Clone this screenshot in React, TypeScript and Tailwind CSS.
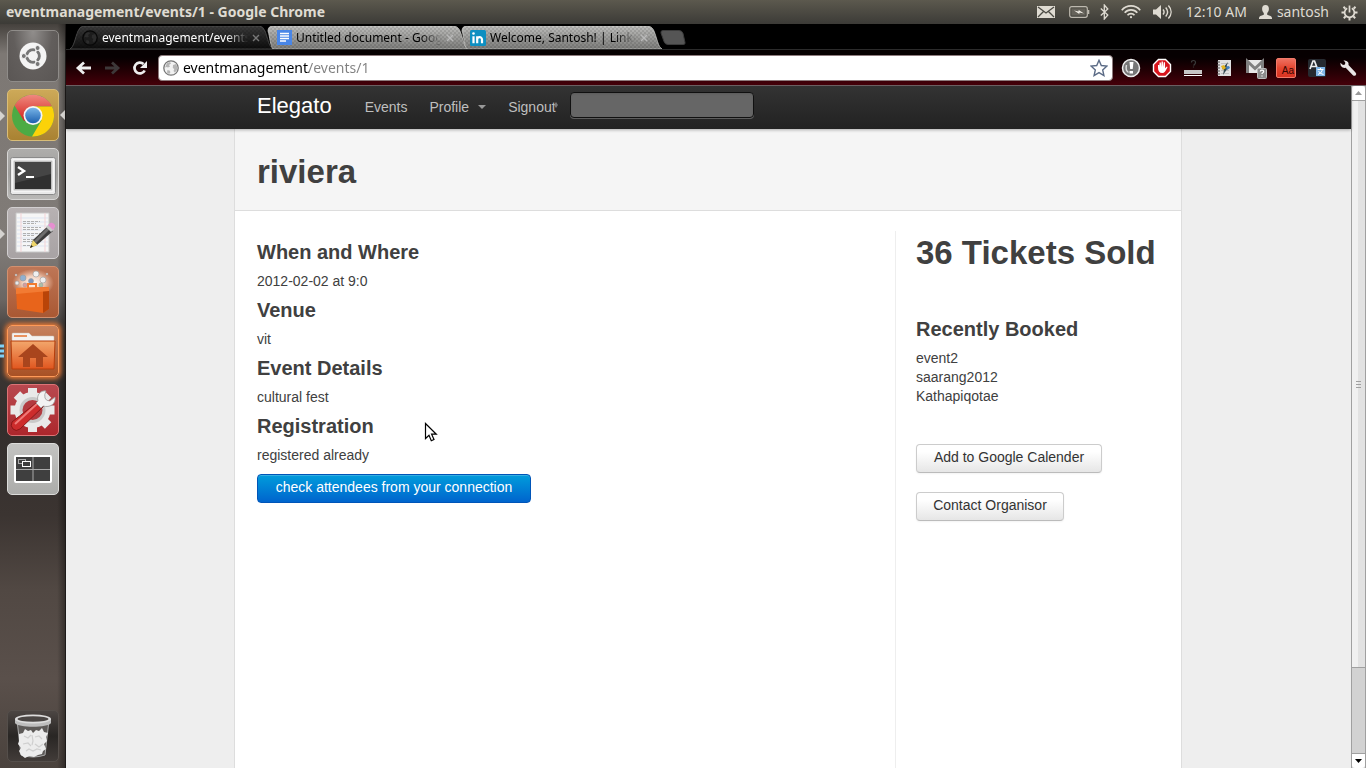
import type { ReactNode } from 'react';

const UI = "font-['Noto_Sans','Open_Sans',sans-serif]";

/* ---------- system panel ---------- */

function SystemBar() {
  return (
    <header
      className={`flex h-6 shrink-0 items-center justify-between bg-linear-to-b from-[#5c594e] to-[#3c3b37] pr-2 pl-[6px] text-[#dfdbd2] ${UI}`}
    >
      <h1 className="text-[14px] leading-6 font-bold whitespace-nowrap">eventmanagement/events/1 - Google Chrome</h1>
      <div className="flex items-center text-[14px] leading-6 whitespace-nowrap">
        <svg className="mr-[14px]" width="18" height="12" viewBox="0 0 18 12" fill="none">
          <rect width="18" height="12" fill="#dfdbd2" />
          <path d="M1 1l8 6 8-6M1 11l5.500-5.500M17 11l-5.500-5.500" stroke="#4b4a43" strokeWidth="1.300" />
        </svg>
        <svg className="mr-[10px]" width="21" height="12" viewBox="0 0 21 12" fill="none">
          <rect x=".7" y=".7" width="17.600" height="10.600" rx="2" stroke="#bdb9af" strokeWidth="1.200" />
          <rect x="2.500" y="2.500" width="14" height="7" fill="#65625a" />
          <path d="M19.500 4v4" stroke="#bdb9af" strokeWidth="1.600" />
          <path d="M5 4.500l4.500 1 .2-1.500 5.300 3.500-4.500-1-.2 1.500z" fill="#f2efe8" />
        </svg>
        <svg className="mr-[12px]" width="9" height="16" viewBox="0 0 9 16" fill="none">
          <path d="M.8 4.500l7 6.500L4.300 15V1l3.500 4-7 6.500" stroke="#dfdbd2" strokeWidth="1.300" />
        </svg>
        <svg className="mr-[12px]" width="20" height="14" viewBox="0 0 20 14" fill="none" stroke="#dfdbd2" strokeWidth="1.700">
          <path d="M.8 5.200C5.500-.6 14.500-.6 19.200 5.200" />
          <path d="M3.700 7.800c3.200-4 9.400-4 12.600 0" />
          <path d="M6.500 10.300c1.800-2.300 5.200-2.300 7 0" />
          <circle cx="10" cy="12.200" r="1.100" fill="#dfdbd2" stroke="none" />
        </svg>
        <svg className="mr-[13px]" width="20" height="16" viewBox="0 0 20 16" fill="none" stroke="#dfdbd2" strokeWidth="1.400">
          <path d="M0 5.500h3L8 1v14l-5-4.500H0z" fill="#dfdbd2" stroke="none" />
          <path d="M10 5.500c1.300 1.500 1.300 3.500 0 5M12.700 3.500c2.300 2.700 2.300 6.300 0 9M15.400 1.500c3.600 4 3.600 9 0 13" />
        </svg>
        <span className="mr-3">12:10 AM</span>
        <svg className="mr-[5px]" width="13" height="14" viewBox="0 0 13 14" fill="#dfdbd2">
          <path d="M6.500 0C8.800 0 9.900 1.600 9.900 3.700c0 2-.8 3.400-1.700 4.200v1.900c1.500.7 4.300.8 4.800 3.200V14H0v-1c.5-2.400 3.300-2.500 4.800-3.200V7.900C3.900 7.100 3.100 5.700 3.100 3.700 3.100 1.600 4.200 0 6.500 0z" />
        </svg>
        <span className="mr-3">santosh</span>
        <svg width="17" height="17" viewBox="0 0 17 17" fill="none" stroke="#dfdbd2">
          <path d="M6.200 4.200a4.900 4.900 0 1 0 4.600 0" strokeWidth="1.700" />
          <path d="M8.500 1.500v7" strokeWidth="1.700" />
          <path
            d="M2.500 2.800l1.900 1.900M14.500 2.800l-1.900 1.900M.5 8.500h2.700M13.800 8.500h2.700M2.800 14.200l1.900-1.900M14.200 14.200l-1.900-1.900M8.500 13.500v3"
            strokeWidth="2"
          />
        </svg>
      </div>
    </header>
  );
}

/* ---------- launcher ---------- */

function Tile({ tone, label, children, mark }: { tone: string; label: string; children: ReactNode; mark?: ReactNode }) {
  return (
    <button
      type="button"
      aria-label={label}
      className={`relative flex size-[52px] shrink-0 items-center justify-center rounded-[5px] border ${tone}`}
    >
      {children}
      {mark}
    </button>
  );
}

function Arrow() {
  return (
    <svg className="absolute top-[21px] -left-2" width="6" height="10" viewBox="0 0 6 10">
      <path d="M0 0l5 5-5 5z" fill="#d5d3d0" />
    </svg>
  );
}

function Launcher() {
  return (
    <nav
      aria-label="Launcher"
      className="flex w-[66px] shrink-0 flex-col gap-[7px] border-r border-[#1d1a19] bg-[linear-gradient(90deg,transparent_88%,rgba(0,0,0,.35)),linear-gradient(180deg,#45413d_0,#7d7874_4%,#807b77_30%,#6b6663_37%,#403a37_42%,#332e2c_54%,#3b3431_66%,#514843_76%,#5a504b_88%,#4a423d_100%)] px-[7px] py-[6px]"
    >
      <Tile label="Dash home" tone="border-[#8f8c89] bg-[radial-gradient(ellipse_at_50%_0%,#918e8c,#625e5c_55%,#5a5654)]">
        <svg width="28" height="28" viewBox="0 0 28 28" fill="none">
          <circle cx="14" cy="14" r="13.500" fill="#f4f4f4" />
          <circle cx="14" cy="14" r="6.300" stroke="#777" strokeWidth="3" />
          <path d="M14 14L5 14M14 14l5-8.500M14 14l5 8.500" stroke="#f4f4f4" strokeWidth="1.500" />
          <circle cx="14" cy="14" r="4.600" fill="#f4f4f4" />
          <g fill="#777" stroke="#f4f4f4">
            <circle cx="4.800" cy="14" r="2.500" />
            <circle cx="18.600" cy="6" r="2.500" />
            <circle cx="18.600" cy="22" r="2.500" />
          </g>
        </svg>
      </Tile>

      <Tile
        label="Google Chrome"
        tone="border-[#d9bd78] bg-linear-to-b from-[#cda958] to-[#a98232]"
        mark={
          <>
            <Arrow />
            <svg className="absolute top-[20px] -right-[7px]" width="5" height="10" viewBox="0 0 5 10">
              <path d="M5 0L0 5l5 5z" fill="#d5d3d0" />
            </svg>
          </>
        }
      >
        <svg width="44" height="44" viewBox="0 0 44 44">
          <defs>
            <linearGradient id="cr" x2="0" y2="1"><stop stopColor="#f08a80" /><stop offset="1" stopColor="#d3221c" /></linearGradient>
            <linearGradient id="cb" x2="0" y2="1"><stop stopColor="#78b5e8" /><stop offset="1" stopColor="#1c5fae" /></linearGradient>
          </defs>
          <circle cx="22" cy="22.500" r="21" fill="#4cab44" />
          <path d="M22 22.500L13 28 3.500 12.500A21 21 0 0 1 41 13.500H22z" fill="url(#cr)" />
          <path d="M22 13.500h19A21 21 0 0 1 21 43.500l9.500-16z" fill="#fbd209" />
          <circle cx="22" cy="22.500" r="9.500" fill="#f5f5f5" />
          <circle cx="22" cy="22.500" r="7.800" fill="url(#cb)" />
        </svg>
      </Tile>

      <Tile label="Terminal" tone="border-[#d7d6d5] bg-linear-to-b from-[#aeadab] via-[#a09f9d] to-[#b9b8b6] pt-1">
        <svg width="46" height="38" viewBox="0 0 46 38">
          <rect x=".5" y=".5" width="45" height="37" rx="2" fill="#e9e9e9" stroke="#8a8a8a" />
          <rect x="3" y="3" width="40" height="31" fill="#bdbdbd" stroke="#fff" />
          <rect x="5" y="5" width="36" height="27" fill="#303030" />
          <path d="M5 5h36v12L5 26z" fill="#454545" />
          <path d="M8 10l6 4-6 4" fill="none" stroke="#fff" strokeWidth="2.400" />
          <path d="M16 20h8" stroke="#fff" strokeWidth="2" />
        </svg>
      </Tile>

      <Tile label="Text Editor" tone="border-[#d2cfd0] bg-linear-to-b from-[#b7b1b2] to-[#a8a3a4]" mark={<Arrow />}>
        <svg width="46" height="46" viewBox="0 0 46 46">
          <path d="M6 3h33v39H6z" fill="#f6f6f6" stroke="#c8c8c8" />
          <path d="M7 8h31M7 12h31M7 16h31M7 20h31M7 24h31M7 28h31M7 32h31M7 36h31" stroke="#dde5f2" />
          <path d="M11 3v39M35 3v39" stroke="#f3d3d6" />
          <path
            d="M13 11.500h17M13 13.500h13M13 17.500h18M13 19.500h16M13 23.500h17M13 25.500h12M13 29.500h14M13 31.500h10M13 35.500h8"
            stroke="#b0b0b0"
            strokeDasharray="3 1"
          />
          <path d="M20 38l3-8 15-14 5 5-16 14z" fill="#3c3c3c" />
          <path d="M24 31l14-14 2 2-14 14z" fill="#6e6e6e" />
          <path d="M36 17l3-3 5.500 5L41 22z" fill="#c9c9c9" />
          <path d="M38 15l2.500-2c2-1 5.500 2 4.500 4l-2 3z" fill="#e68fd0" />
          <path d="M20 38l3-8 4.500 5z" fill="#efd66a" />
          <path d="M20 38l1.200-3 1.800 1.600z" fill="#222" />
        </svg>
      </Tile>

      <Tile label="Software Centre" tone="border-[#d2906f] bg-linear-to-b from-[#be7656] to-[#a95833]">
        <svg width="44" height="46" viewBox="0 0 44 46">
          <defs>
            <radialGradient id="glow"><stop stopColor="#fff" /><stop offset=".5" stopColor="#ffe7d8" stopOpacity=".8" /><stop offset="1" stopColor="#ffd7bd" stopOpacity="0" /></radialGradient>
          </defs>
          <ellipse cx="22" cy="14" rx="21" ry="14" fill="url(#glow)" />
          <g stroke="#999" strokeWidth=".6">
            <circle cx="12" cy="9" r="3" fill="#8fb0d0" />
            <circle cx="25" cy="5" r="3" fill="#f0f0f0" />
            <circle cx="20" cy="12" r="2.500" fill="#7e96bc" />
            <circle cx="32" cy="11" r="3" fill="#eee" />
            <circle cx="6" cy="14" r="2" fill="#e9e9e9" />
            <circle cx="14" cy="16" r="2" fill="#d99" />
            <circle cx="30" cy="16" r="2" fill="#a9c0a9" />
            <circle cx="36" cy="5" r="1" fill="#fff" />
            <circle cx="5" cy="6" r="1" fill="#fff" />
          </g>
          <path d="M5 19l33-1v22l-6 4-26-4z" fill="#e8641b" />
          <path d="M32 19l6-1v22l-6 4z" fill="#b94408" />
          <path d="M5 19l33-1v4L5 25z" fill="#f27b33" />
          <path d="M17 20v-5h8v5" fill="none" stroke="#f27c30" strokeWidth="2" />
        </svg>
      </Tile>

      <Tile
        label="Home Folder"
        tone="border-[#ff9a58] bg-linear-to-b from-[#c6815d] to-[#a85125] shadow-[0_0_5px_2px_#ee7a35]"
        mark={
          <svg className="absolute top-[18px] -left-2" width="6" height="14" viewBox="0 0 6 14">
            <path d="M0 2h4M0 7h4M0 12h4" stroke="#7fd0f5" strokeWidth="3" />
          </svg>
        }
      >
        <svg width="46" height="40" viewBox="0 0 46 40">
          <defs>
            <linearGradient id="fo" x2="0" y2="1"><stop stopColor="#f3a76c" /><stop offset="1" stopColor="#e0561f" /></linearGradient>
          </defs>
          <path d="M2 3q0-1 1-1h16l3 3h21q1 0 1 1v8H2z" fill="#f4f2f0" stroke="#c8b8ae" strokeWidth=".5" />
          <path d="M4 5h13" stroke="#e9925f" strokeWidth="2" />
          <path d="M1 10h44l-1 28H2z" fill="url(#fo)" stroke="#b63e0c" />
          <path d="M8 26l15-13 15 13h-5v10h-7v-9h-6v9h-7V26z" fill="#a9451d" />
        </svg>
      </Tile>

      <Tile label="System Settings" tone="border-[#dc7476] bg-linear-to-b from-[#b8484f] to-[#ac262c]">
        <svg width="46" height="46" viewBox="0 0 46 46">
          <g fill="#e9e9e9">
            <path d="M18 1h9v44h-9z" />
            <path d="M18 1h9v44h-9z" transform="rotate(45 22.500 23)" />
            <path d="M18 1h9v44h-9z" transform="rotate(90 22.500 23)" />
            <path d="M18 1h9v44h-9z" transform="rotate(135 22.500 23)" />
            <circle cx="22.500" cy="23" r="18" />
          </g>
          <circle cx="22.500" cy="23" r="13" fill="#c9c9c9" />
          <circle cx="22.500" cy="23" r="10" fill="#b23a3f" />
          <path d="M30 13l5 5L10 42q-4 3-7 0t-1-7z" fill="#cd2c2c" stroke="#8b1717" />
          <path d="M29 15L5 37" stroke="#ef7a78" strokeWidth="2" />
          <path
            d="M36 4c-5-1-10 4-8 10l-2 2 5 5 2-2c7 2 13-2 12-9l-5 4q-4 0-5-3t1-7z"
            fill="#f3f3f3"
            stroke="#999"
            strokeWidth=".8"
          />
        </svg>
      </Tile>

      <Tile label="Workspace Switcher" tone="border-[#dcdcda] bg-linear-to-b from-[#c3c3c1] to-[#acacaa]">
        <svg width="38" height="28" viewBox="0 0 38 28" fill="none">
          <rect x="1" y="1" width="36" height="26" rx="1" fill="#3f3f3f" stroke="#fff" strokeWidth="2" />
          <path d="M19 2v24M2 14.500h34" stroke="#aaa" />
          <rect x="4.500" y="4.500" width="7" height="4" stroke="#aaa" />
          <rect x="8.500" y="6.500" width="8" height="5" fill="#3f3f3f" stroke="#fff" />
        </svg>
      </Tile>

      <div className="mt-auto">
        <Tile label="Rubbish Bin" tone="border-[#554f4b] bg-linear-to-b from-[#4c4643] via-[#292624] to-[#423c39]">
          <svg width="38" height="46" viewBox="0 0 38 46">
            <path d="M3 7l4 35q12 4 24 0l4-35z" fill="#5d5a58" stroke="#aaa" />
            <path
              d="M5 21l4-1 2-4 3 2 3-1 2 3 3-3 3 1 3-3 2 4 4 1-2 4 1 4-3 3 2 5-3 2-1 3-4 1-4 2-5-1-4 2-4-3-2-4 2-3-3-4 1-3z"
              fill="#ececec"
            />
            <path d="M10 23l4 2 3-3M21 24l4-1 3 3M9 31l5-1 3 3M21 31l4 3 4-3M18 22l1 6-1 4M12 38l3-2 4 2 4-2 4 1" fill="none" stroke="#cfcfcf" strokeWidth="1.200" />
            <path d="M1 6v4c3 5 33 5 36 0V6z" fill="#bdbdbd" />
            <ellipse cx="19" cy="6" rx="18" ry="4.500" fill="#ddd" />
            <ellipse cx="19" cy="6" rx="15.500" ry="2.800" fill="#4a4644" />
          </svg>
        </Tile>
      </div>
    </nav>
  );
}

/* ---------- browser chrome ---------- */

function Globe({ dark = false }: { dark?: boolean }) {
  return (
    <svg className="shrink-0" width="16" height="16" viewBox="0 0 16 16">
      <circle cx="8" cy="8" r="7.200" fill={dark ? '#1c1c1c' : '#f2f2f2'} stroke={dark ? '#080808' : '#777'} strokeWidth="1.300" />
      <path
        d="M4 3l3-1 1 1.500L6 5l1 1.500-2 1L3.500 7 2 7.500zM10 5l3-1 1.500 3-.7 3.500-2 2L10.500 11l.8-2-1.500-1zM4.500 10l2.500.8.3 2-1.300 1.200-2-1.500z"
        fill={dark ? '#2c2c2c' : '#b5b5b5'}
      />
    </svg>
  );
}

function Tab({ title, icon, active = false }: { title: string; icon: ReactNode; active?: boolean }) {
  return (
    <div className="relative flex h-[23px] w-[194px] shrink-0 items-center pl-2">
      <svg className="absolute top-0 -left-1" width="206" height="23" viewBox="0 0 206 23">
        <defs>
          <linearGradient id="tabOn" x2="0" y2="1"><stop stopColor="#3a3a3a" /><stop offset="1" stopColor="#0c0c0c" /></linearGradient>
          <linearGradient id="tabOff" x2="0" y2="1"><stop stopColor="#bdbdbb" /><stop offset="1" stopColor="#7c7c7a" /></linearGradient>
          <pattern id="weave" width="4" height="4" patternUnits="userSpaceOnUse">
            <path d="M0 0h2v2H0zM2 2h2v2H2z" fill="#000" opacity=".1" />
          </pattern>
        </defs>
        <path
          d={
            active
              ? 'M0 23C4 21 5 12 8 5q2-5 6-5h175q4 0 6 5c3 7 4 18 9 18z'
              : 'M9 23C6 19 6 11 4 5Q4 0 9 0h180q5 0 7 5c3 7 4 16 8 18z'
          }
          fill={active ? 'url(#tabOn)' : 'url(#tabOff)'}
          stroke={active ? '#5a5a5a' : '#d2d2d0'}
          strokeWidth=".7"
        />
        <path d="M9 23C6 19 6 11 6 5Q6 0 11 0h178q5 0 7 5c3 7 4 16 8 18z" fill="url(#weave)" />
      </svg>
      <span className="relative mr-1 flex size-4 shrink-0 items-center justify-center">{icon}</span>
      <a
        href="#tab"
        className={`relative w-[146px] overflow-hidden text-[12px] leading-[22px] whitespace-nowrap [mask-image:linear-gradient(90deg,#000_85%,transparent)] ${active ? 'text-white' : 'text-black'}`}
      >
        {title}
      </a>
      <button type="button" aria-label="Close tab" className="relative ml-1">
        <svg width="8" height="8" viewBox="0 0 8 8">
          <path d="M1 1l6 6M7 1L1 7" stroke={active ? '#777' : '#b9b9b9'} strokeWidth="1.400" />
        </svg>
      </button>
    </div>
  );
}

function TabStrip() {
  return (
    <div className="flex h-[26px] items-end border-b border-[#2b2b2b] pt-[2px] pl-2">
      <Tab active title="eventmanagement/events/1" icon={<Globe dark />} />
      <Tab
        title="Untitled document - Google Docs"
        icon={
          <svg width="15" height="15" viewBox="0 0 15 15">
            <rect width="15" height="15" fill="#4986e7" />
            <path d="M3 3.500h9M3 6h9M3 8.500h9M3 11h6" stroke="#fff" strokeWidth="1.300" />
          </svg>
        }
      />
      <Tab
        title="Welcome, Santosh! | LinkedIn"
        icon={
          <svg width="16" height="16" viewBox="0 0 16 16">
            <rect width="16" height="16" rx="1.500" fill="#0d8fc1" />
            <path d="M3.500 6.200v7M7.200 13.200v-7M7.200 9.500c0-3 4.800-3.200 4.800 0v3.700" stroke="#fff" strokeWidth="2.200" fill="none" />
            <circle cx="3.500" cy="3.500" r="1.300" fill="#fff" />
          </svg>
        }
      />
      <button type="button" aria-label="New tab" className="mb-[4px] ml-[4px]">
        <svg width="26" height="15" viewBox="0 0 26 15">
          <path d="M3 .5h16q3 0 4 3l2 9q.5 2-2 2H8q-3 0-4-3L1 3Q.5.5 3 .5z" fill="#555" stroke="#3c3c3c" />
        </svg>
      </button>
    </div>
  );
}

function Extensions() {
  return (
    <div className="flex shrink-0 items-center gap-[11px] pr-2">
      <button type="button" aria-label="Disconnect">
        <svg width="20" height="20" viewBox="0 0 20 20">
          <circle cx="10" cy="10" r="8.500" fill="#777" stroke="#eee" strokeWidth="1.500" />
          <path d="M8.500 4h4l-.8 7H9.200z" fill="#fff" />
          <path d="M8.500 13h3.500v2.500H8.500z" fill="#fff" />
          <path d="M5.500 7Q4 12 7.500 14.500" fill="none" stroke="#ddd" strokeWidth="1.400" />
        </svg>
      </button>
      <button type="button" aria-label="Block ads">
        <svg width="20" height="20" viewBox="0 0 20 20">
          <path d="M6.500 1.500h7l5 5v7l-5 5h-7l-5-5v-7z" fill="#d8141c" stroke="#fff" strokeWidth="1.400" />
          <path d="M6 9.500V7h1.200v2.500l.4-5h1.300l.2 4.500.5-5.500h1.300l.2 5.500.7-4.800h1.200l.1 6 1.700-1.700c1 .3.8 1-.2 2.500-1.200 2-2 4-4.300 4-3 0-4.300-2-4.300-5.500z" fill="#fff" />
        </svg>
      </button>
      <button type="button" aria-label="Page rank">
        <svg width="20" height="20" viewBox="0 0 20 20">
          <path d="M8.500 4.500q0-2 2-2t2 2q0 1-1 2t-1 1M10.500 8.500v1" fill="none" stroke="#3a3a3a" strokeWidth="1.200" />
          <rect x="1" y="12" width="18" height="4" fill="#c6c6c6" />
          <path d="M1 17.500h18" stroke="#fff" />
        </svg>
      </button>
      <button type="button" aria-label="Notes">
        <svg width="20" height="20" viewBox="0 0 20 20">
          <path d="M4 2h13v16H4z" fill="#e0e0e0" />
          <path d="M3 4h3M3 7h3M3 10h3M3 13h3M3 16h3" stroke="#555" />
          <path d="M7 5.500h8M7 8.500h8M7 12.500h8M7 15.500h8" stroke="#c0c0c0" />
          <path d="M14 4l-1.500 4.500 2 .5L9 17l1-5.500-2-.5z" fill="#32484f" />
          <path d="M7 8l3-1 2 3-3 2z" fill="#e4b51e" />
          <path d="M12 9l3-1 1 2-3 2z" fill="#3f7fc0" />
        </svg>
      </button>
      <button type="button" aria-label="Mail checker">
        <svg width="22" height="22" viewBox="0 0 22 22" className="-mr-[2px]">
          <rect x="1" y="3" width="18" height="13" fill="#e8e8e8" />
          <path d="M2.500 16V4.500l7.500 7 7.500-7V16" fill="none" stroke="#808080" strokeWidth="3" />
          <rect x="12.500" y="11.500" width="9" height="10" rx="1" fill="#8d8d8d" stroke="#bbb" />
          <path d="M15.300 14.500q0-1.300 1.700-1.300t1.700 1.300q0 .7-.9 1.200t-.8 1.300M17 18.500v1" fill="none" stroke="#fff" strokeWidth="1.200" />
        </svg>
      </button>
      <button
        type="button"
        className="flex size-[20px] items-end justify-end rounded-[2px] border border-[#f27a6a] bg-linear-to-b from-[#ee7060] via-[#e4452f] to-[#d83222] pr-[1px] font-['Liberation_Sans',sans-serif] text-[10px] leading-[13px] text-[#360603]"
      >
        Aa
      </button>
      <button type="button" aria-label="Translate">
        <svg width="20" height="20" viewBox="0 0 20 20">
          <rect x="1" y="1" width="18" height="18" rx="2" fill="#262a30" />
          <path d="M3 11L6 3h1.500l3 8M4 8.500h5.500" fill="none" stroke="#eee" strokeWidth="1.700" />
          <rect x="9" y="9" width="9" height="9" fill="#7eb4e6" />
          <path d="M10.500 11.500h6M13.500 10v1.500M11 16.500q4-1.500 4.500-5M11.500 13q1.500 3 5 3.500" stroke="#fff" fill="none" />
        </svg>
      </button>
      <button type="button" aria-label="Settings">
        <svg width="20" height="20" viewBox="0 0 20 20">
          <path
            d="M5.500 2.300l3 .6q2.500 1 2 4l7 7.500q1.500 1.500.2 2.800t-2.800 0L7.700 9.800q-3.700.8-5-2.300l-.4-2.800L5 6.900l2-.5.300-1.800z"
            fill="#e9e6e6"
          />
        </svg>
      </button>
    </div>
  );
}

function Toolbar() {
  return (
    <div className="flex h-[35px] items-center bg-linear-to-b from-[#060001] from-20% to-[#46000a] pl-[9px]">
      <button type="button" aria-label="Back" className="mr-[12px]">
        <svg width="17" height="16" viewBox="0 0 17 16" fill="none" stroke="#eee" strokeWidth="2.800">
          <path d="M16 8H4M9 2.500L3 8l6 5.500" />
        </svg>
      </button>
      <button type="button" aria-label="Forward" className="mr-[11px]">
        <svg width="17" height="16" viewBox="0 0 17 16" fill="none" stroke="#3d3839" strokeWidth="2.800">
          <path d="M1 8h12M8 2.500L14 8l-6 5.500" />
        </svg>
      </button>
      <button type="button" aria-label="Reload" className="mr-[10px]">
        <svg width="16" height="16" viewBox="0 0 16 16" fill="none">
          <path d="M12.700 10.500A5.400 5.400 0 1 1 11.500 4" stroke="#eee" strokeWidth="2.700" />
          <path d="M15 1v7H8z" fill="#eee" />
        </svg>
      </button>
      <div className="mr-2 flex h-[26px] flex-1 items-center gap-1 rounded-[4px] border border-[#8d7b7d] bg-white px-1">
        <Globe />
        <input
          aria-label="Address"
          defaultValue="eventmanagement/events/1"
          className="h-[22px] min-w-0 flex-1 bg-[linear-gradient(90deg,#000_126px,#808080_126px)] bg-clip-text text-[14px] leading-[22px] text-transparent caret-black outline-none"
        />
        <svg width="18" height="18" viewBox="0 0 18 18">
          <path d="M9 1.300l2.300 5.200 5.600.6-4.200 3.800 1.200 5.600L9 13.600l-4.900 2.900 1.200-5.600L1.100 7.100l5.600-.6z" fill="#fff" stroke="#5b6b86" strokeWidth="1.400" />
        </svg>
      </div>
      <Extensions />
    </div>
  );
}

/* ---------- web page ---------- */

function SiteNav() {
  return (
    <nav className="relative z-10 flex h-[43px] shrink-0 justify-center bg-linear-to-b from-[#333] to-[#222] pr-px shadow-[0_1px_3px_rgba(0,0,0,.3)]">
      <div className="flex w-full max-w-[948px] items-center pb-[2px] pl-[23px] text-[14px] leading-5 text-[#bfbfbf]">
        <a href="#home" className="mr-[33px] pb-[2px] text-[22px] text-white">
          Elegato
        </a>
        <a href="#events" className="mr-[22px]">
          Events
        </a>
        <a href="#profile" className="mr-[22px] flex items-center">
          Profile
          <svg className="ml-[9px]" width="8" height="4" viewBox="0 0 8 4">
            <path d="M0 0h8L4 4z" fill="#999" />
          </svg>
        </a>
        <a href="#signout" className="flex items-center">
          Signout
          <svg className="-ml-[2px] mb-1" width="4" height="6" viewBox="0 0 4 6">
            <path d="M2 0l2 3-2 3-2-3z" fill="#777" />
          </svg>
        </a>
        <input
          aria-label="Search"
          className="mb-1 ml-3 h-[26px] w-[184px] rounded-[4px] border border-[#111] bg-[#666] px-2 text-white shadow-[inset_0_1px_2px_rgba(0,0,0,.1),0_1px_0_rgba(255,255,255,.25)] outline-none"
        />
      </div>
    </nav>
  );
}

const details = [
  ['When and Where', '2012-02-02 at 9:0'],
  ['Venue', 'vit'],
  ['Event Details', 'cultural fest'],
  ['Registration', 'registered already'],
];

const recent = ['event2', 'saarang2012', 'Kathapiqotae'];

const plainButton =
  'h-[29px] rounded-[4px] border border-[#ccc] border-b-[#bbb] bg-linear-to-b from-white from-25% to-[#e6e6e6] pb-[2px] text-center leading-[25px] text-[#333] shadow-[inset_0_1px_0_rgba(255,255,255,.2),0_1px_2px_rgba(0,0,0,.05)]';

function EventPage() {
  return (
    <main className="flex min-h-0 flex-1 justify-center overflow-hidden bg-[#eee] pr-px">
      <div className="flex w-full max-w-[948px] flex-col border-x border-[#ddd] bg-white">
        <div className="border-b border-[#ddd] bg-[#f5f5f5] pt-[24px] pb-[20px] pl-[22px]">
          <h1 className="text-[33px] leading-[37px] font-bold">riviera</h1>
        </div>
        <div className="flex flex-1 pt-[20px] pl-[22px]">
          <section className="flex-1 pt-1">
            {details.map(([heading, text]) => (
              <div key={heading}>
                <h3 className="text-[20px] leading-[34px] font-bold">{heading}</h3>
                <p className="leading-[24px]">{text}</p>
              </div>
            ))}
            <button
              type="button"
              className="mt-[7px] h-[29px] w-[274px] rounded-[4px] border border-[#0055b8] bg-linear-to-b from-[#049cdb] to-[#0064cd] pb-[2px] text-center leading-[25px] text-white shadow-[inset_0_1px_0_rgba(255,255,255,.2)]"
            >
              check attendees from your connection
            </button>
          </section>
          <aside className="w-[286px] border-l border-[#eee] pl-[20px]">
            <h1 className="pt-[3px] text-[33px] leading-[37px] font-bold whitespace-nowrap">36 Tickets Sold</h1>
            <h3 className="mt-[41px] text-[20px] leading-[34px] font-bold">Recently Booked</h3>
            <ul className="mt-[3px] leading-[19px]">
              {recent.map((name) => (
                <li key={name}>{name}</li>
              ))}
            </ul>
            <div className="mt-[38px] flex flex-col items-start gap-[19px]">
              <button type="button" className={`${plainButton} w-[186px]`}>
                Add to Google Calender
              </button>
              <button type="button" className={`${plainButton} w-[148px]`}>
                Contact Organisor
              </button>
            </div>
          </aside>
        </div>
      </div>
    </main>
  );
}

function ScrollBar() {
  return (
    <div className="flex w-[15px] shrink-0 flex-col border-x border-[#a0a0a0] bg-[#d2d2d2]">
      <button type="button" aria-label="Scroll up" className="flex h-[15px] items-center justify-center rounded-t-[3px] border-b border-[#a0a0a0] bg-white">
        <svg width="7" height="4" viewBox="0 0 7 4">
          <path d="M3.500 0L7 4H0z" fill="#999" />
        </svg>
      </button>
      <div className="flex flex-[567] items-center justify-center border-b border-[#a0a0a0] bg-linear-to-r from-[#f0f0f0] from-50% to-[#e2e2e2] to-50%">
        <svg width="5" height="7" viewBox="0 0 5 7">
          <path d="M0 .5h5M0 3.500h5M0 6.500h5" stroke="#a0a0a0" />
        </svg>
      </div>
      <div className="flex-[85]" />
      <button type="button" aria-label="Scroll down" className="flex h-[15px] items-center justify-center rounded-b-[3px] border-t border-[#a0a0a0] bg-white">
        <svg width="7" height="4" viewBox="0 0 7 4">
          <path d="M0 0h7L3.500 4z" fill="#000" />
        </svg>
      </button>
    </div>
  );
}

export default function App() {
  return (
    <div className="relative flex h-screen flex-col overflow-hidden bg-black">
      <SystemBar />
      <div className="flex min-h-0 flex-1">
        <Launcher />
        <div className="flex min-w-0 flex-1 flex-col">
          <div className={`shrink-0 border-b border-[#706568] bg-black ${UI}`}>
            <TabStrip />
            <Toolbar />
          </div>
          <div className="flex min-h-0 flex-1">
            <div className="flex min-w-0 flex-1 flex-col font-['Liberation_Sans',Arial,sans-serif] text-[14px] text-[#404040]">
              <SiteNav />
              <EventPage />
            </div>
            <ScrollBar />
          </div>
        </div>
      </div>
      <svg className="pointer-events-none absolute top-[422px] left-[424px]" width="14" height="21" viewBox="0 0 14 21">
        <path d="M1.500 1.500v15l3.500-3.300 2.300 5.500 2.700-1.200-2.400-5.300h4.700z" fill="#fff" stroke="#000" strokeWidth="1.200" />
      </svg>
    </div>
  );
}
